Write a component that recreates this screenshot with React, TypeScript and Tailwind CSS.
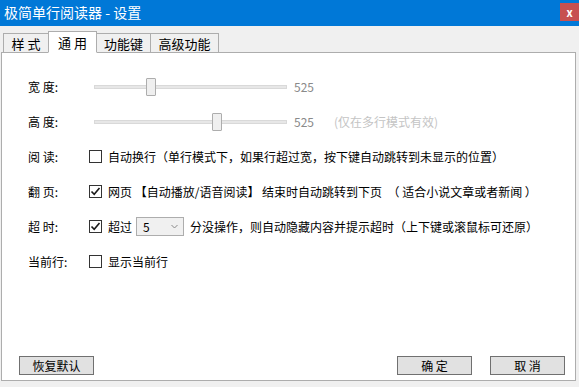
import React, { useState } from 'react';

const font = { fontFamily: '"Microsoft YaHei", "Noto Sans CJK SC", "Noto Sans", sans-serif' };

const Checkbox: React.FC<{ checked: boolean; onChange: () => void }> = ({ checked, onChange }) => (
  <button
    onClick={onChange}
    className="w-[13px] h-[13px] border border-[#333333] bg-white flex items-center justify-center shrink-0"
  >
    {checked && (
      <svg width="11" height="11" viewBox="0 0 11 11">
        <polyline points="1.5,5.5 4.2,8.3 9.5,2" fill="none" stroke="#1a1a1a" strokeWidth="1.6" />
      </svg>
    )}
  </button>
);

const Slider: React.FC<{ thumb: number }> = ({ thumb }) => (
  <div className="flex items-center">
    <div className="w-[5px]" />
    <div className="relative w-[193px] h-[4px] bg-[#e7e7e7] border border-[#d9d9d9]">
      <div
        className="absolute top-[-8px] w-[10px] h-[18px] bg-[#efefef] border border-[#adadad] rounded-[1px]"
        style={{ left: thumb }}
      />
    </div>
    <span className="ml-[7px] text-[#8a8a8a]">525</span>
  </div>
);

const Row: React.FC<{ label: string; children: React.ReactNode }> = ({ label, children }) => (
  <div className="h-[35px] flex items-center">
    <div className="w-[61px] shrink-0">{label}</div>
    <div className="flex items-center">{children}</div>
  </div>
);

const tabs = [
  { t: '样 式', w: 'w-[46px]' },
  { t: '通 用', w: 'w-[49px]' },
  { t: '功能键', w: 'w-[55px]' },
  { t: '高级功能', w: 'w-[69px]' },
];

export default function App() {
  const [wrap, setWrap] = useState(false);
  const [page, setPage] = useState(true);
  const [timeout, setTimeoutOn] = useState(true);
  const [showLine, setShowLine] = useState(false);
  const [active, setActive] = useState(1);

  return (
    <div className="w-[579px] h-[387px] bg-[#f0f0f0] flex flex-col text-[12px] text-black overflow-hidden" style={font}>
      <div className="h-[26px] bg-[#0078d7] flex items-start justify-between shrink-0">
        <span className="text-white text-[14px] leading-[24px] pl-[4px]">极简单行阅读器 - 设置</span>
        <button className="mt-[3px] w-[19px] h-[18px] bg-[#c75050] text-white text-[11px] font-bold leading-[17px]">x</button>
      </div>

      <div className="flex items-end pl-[3px] mt-[5px] h-[21px] relative z-10">
        {tabs.map((tab, i) =>
          i === active ? (
            <button
              key={tab.t}
              onClick={() => setActive(i)}
              className={`${tab.w} h-[22px] -mb-px -ml-px bg-white border border-[#adadad] border-b-white text-[13px] leading-[19px] whitespace-pre`}
            >
              {tab.t}
            </button>
          ) : (
            <button
              key={tab.t}
              onClick={() => setActive(i)}
              className={`${tab.w} h-[19px] bg-[#f0f0f0] border border-[#adadad] border-b-0 -ml-px first:ml-0 text-[13px] leading-[17px] whitespace-pre`}
            >
              {tab.t}
            </button>
          )
        )}
      </div>

      <div className="ml-[1px] w-[575px] h-[329px] bg-white border border-[#adadad] flex flex-col">
        <div className="pl-[26px] pt-[16px] flex flex-col">
          <Row label="宽 度:">
            <Slider thumb={51} />
          </Row>
          <Row label="高 度:">
            <Slider thumb={117} />
            <span className="ml-[20px] text-[#c4c4c4]">(仅在多行模式有效)</span>
          </Row>
          <Row label="阅 读:">
            <Checkbox checked={wrap} onChange={() => setWrap(!wrap)} />
            <span className="ml-[6px]">自动换行（单行模式下，如果行超过宽，按下键自动跳转到未显示的位置）</span>
          </Row>
          <Row label="翻 页:">
            <Checkbox checked={page} onChange={() => setPage(!page)} />
            <span className="ml-[6px] whitespace-pre">网页 【自动播放/语音阅读】 结束时自动跳转到下页  （ 适合小说文章或者新闻 ）</span>
          </Row>
          <Row label="超 时:">
            <Checkbox checked={timeout} onChange={() => setTimeoutOn(!timeout)} />
            <span className="ml-[6px]">超过</span>
            <div className="ml-[4px] w-[48px] h-[19px] bg-[#f0f0f0] border border-[#adadad] flex items-center justify-between pl-[6px] pr-[5px]">
              <span>5</span>
              <svg width="7" height="5" viewBox="0 0 7 5">
                <polyline points="0.5,1 3.5,4 6.5,1" fill="none" stroke="#888888" strokeWidth="1" />
              </svg>
            </div>
            <span className="ml-[6px]">分没操作，则自动隐藏内容并提示超时（上下键或滚鼠标可还原）</span>
          </Row>
          <Row label="当前行:">
            <Checkbox checked={showLine} onChange={() => setShowLine(!showLine)} />
            <span className="ml-[6px]">显示当前行</span>
          </Row>
        </div>

        <div className="mt-auto mb-[5px] flex items-center pl-[17px] pr-[10px]">
          <button className="w-[75px] h-[19px] bg-[#e1e1e1] border border-[#707070] leading-[17px]">恢复默认</button>
          <div className="flex-1" />
          <button className="w-[75px] h-[19px] bg-[#e1e1e1] border border-[#707070] leading-[17px] whitespace-pre">确 定</button>
          <button className="ml-[18px] w-[75px] h-[19px] bg-[#e1e1e1] border border-[#707070] leading-[17px] whitespace-pre">取 消</button>
        </div>
      </div>
    </div>
  );
}
